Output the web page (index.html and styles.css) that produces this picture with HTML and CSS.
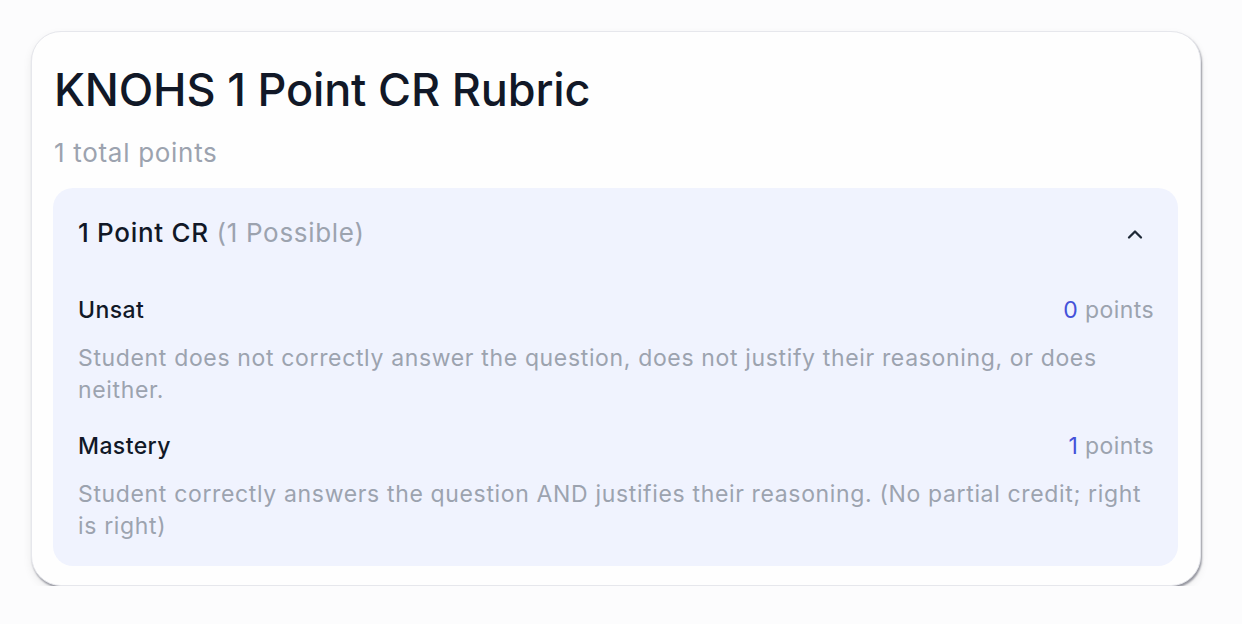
FILE: index.html
```html
<!DOCTYPE html>
<html lang="en">
<head>
<meta charset="utf-8">
<title>KNOHS 1 Point CR Rubric</title>
<link rel="stylesheet" href="styles.css">
</head>
<body>
<main class="card">
  <h1 class="title">KNOHS 1 Point CR Rubric</h1>
  <p class="total">1 total points</p>
  <section class="panel">
    <div class="panel-head">
      <h2 class="crit">1 Point CR <span class="possible">(1 Possible)</span></h2>
      <svg class="chev" width="18" height="18" viewBox="0 0 18 18" aria-hidden="true"><path d="M3 11.5 L9 5.5 L15 11.5" fill="none" stroke="#1f2937" stroke-width="2.3" stroke-linecap="round" stroke-linejoin="round"/></svg>
    </div>
    <div class="levels">
      <div class="level">
        <div class="level-row">
          <span class="level-name">Unsat</span>
          <span class="level-pts"><span class="num">0</span> points</span>
        </div>
        <p class="level-desc">Student does not correctly answer the question, does not justify their reasoning, or does neither.</p>
      </div>
      <div class="level">
        <div class="level-row">
          <span class="level-name">Mastery</span>
          <span class="level-pts"><span class="num">1</span> points</span>
        </div>
        <p class="level-desc">Student correctly answers the question AND justifies their reasoning. (No partial credit; right is right)</p>
      </div>
    </div>
  </section>
</main>
</body>
</html>
```
FILE: styles.css
```css
* { box-sizing: border-box; }
html, body { margin: 0; padding: 0; }
body {
  background: #fcfcfd;
  font-family: Inter, "Noto Sans", sans-serif;
  padding: 31px 0 0 31px;
}
.card {
  width: 1170px;
  height: 555px;
  background: #fefefe;
  border: 1px solid #e6e7ec;
  border-radius: 30px;
  box-shadow: 1px 2px 2px rgba(90, 92, 105, 0.6), 0 4px 10px rgba(0, 0, 0, 0.07);
  padding: 31px 22px 0 21px;
}
.title {
  margin: 0;
  padding-left: 1px;
  font-size: 45px;
  line-height: 54px;
  font-weight: 500;
  color: #111827;
  letter-spacing: -0.15px;
}
.total {
  margin: 20px 0 0 0;
  padding-left: 1px;
  font-size: 26px;
  line-height: 32px;
  color: #9ca3af;
  letter-spacing: 0.7px;
}
.panel {
  margin-top: 19px;
  background: #f0f3fe;
  border-radius: 20px;
  padding: 29px 24px 24px 25px;
}
.panel-head {
  display: flex;
  align-items: center;
  justify-content: space-between;
}
.crit {
  margin: 0;
  font-size: 26px;
  line-height: 32px;
  font-weight: 500;
  color: #111827;
  letter-spacing: 0.7px;
}
.possible { font-weight: 400; color: #9ca3af; }
.chev { margin: 4px 10px 0 0; }
.levels {
  margin-top: 45px;
  display: flex;
  flex-direction: column;
  gap: 24px;
}
.level-row {
  display: flex;
  justify-content: space-between;
  font-size: 23px;
  line-height: 32px;
  letter-spacing: 0.4px;
}
.level-name { color: #111827; font-weight: 500; }
.level-pts { color: #9ca3af; }
.num { color: #4451d9; }
.level-desc {
  margin: 16px 0 0 0;
  font-size: 23px;
  line-height: 32px;
  color: #9ca3af;
  letter-spacing: 0.65px;
}
```
